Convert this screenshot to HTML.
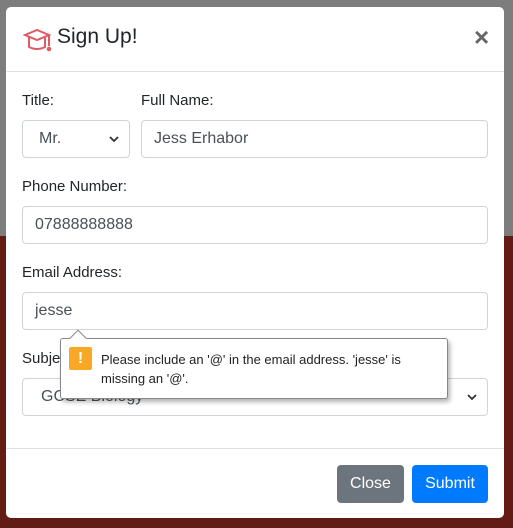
<!DOCTYPE html>
<html><head><style>
body{margin:0;width:513px;height:528px;overflow:hidden;position:relative;font-family:"Liberation Sans",sans-serif;background:#631b15}
.top{position:absolute;left:0;top:0;width:513px;height:236px;background:#7d7d7d}
.modal{position:absolute;left:6px;top:7px;width:498px;height:511px;background:#fff;border-radius:5px}
.hdr{position:absolute;left:0;top:0;width:498px;height:64px;border-bottom:1px solid #dee2e6}
.ttl{position:absolute;left:51px;top:18px;font-size:21px;color:#212529}
.x{position:absolute;left:468px;top:15px;font-size:26px;color:#666;font-weight:bold}
.lbl{position:absolute;font-size:15px;color:#212529}
.inp{position:absolute;border:1px solid #ced4da;border-radius:4px;font-size:16px;color:#495057;line-height:36px;padding-left:12px;box-sizing:border-box;height:38px}
.chev{position:absolute;right:10px;top:14px}
.ftr{position:absolute;left:0;top:441px;width:498px;border-top:1px solid #dee2e6}
.btn{position:absolute;top:458px;height:38px;border-radius:4px;color:#fff;font-size:16px;line-height:38px;text-align:center}
.tip{position:absolute;left:60px;top:338px;width:388px;height:61px;background:#fff;border:1px solid #888;border-radius:3px;box-shadow:2px 3px 5px rgba(0,0,0,.3);box-sizing:border-box}
.tip:before{content:"";position:absolute;left:11px;top:-7px;width:11px;height:11px;background:#fff;border-left:1px solid #888;border-top:1px solid #888;transform:rotate(45deg)}
.warn{position:absolute;left:8px;top:8px;width:23px;height:23px;background:#f9a825;color:#fff;font-weight:bold;text-align:center;line-height:23px;font-size:16px;border-radius:2px}
.msg{position:absolute;left:40px;top:11px;font-size:13px;line-height:19px;color:#222;width:340px}
</style></head><body>
<div class="top"></div>
<div class="modal">
<div class="hdr">
<svg style="position:absolute;left:17px;top:20px" width="30" height="30" viewBox="0 0 30 30" fill="none" stroke="#e05a66" stroke-width="2"><path d="M2 8 L14 3 L26 8 L14 13 Z"/><path d="M6 10 V20 Q14 24 22 20 V10"/><path d="M26 8 V19"/><circle cx="26" cy="22" r="1.3" fill="#e05a66"/></svg>
<div class="ttl">Sign Up!</div>
<div class="x">×</div>
</div>
<div class="lbl" style="left:16px;top:85px">Title:</div>
<div class="lbl" style="left:135px;top:85px">Full Name:</div>
<div class="inp" style="left:16px;top:113px;width:108px;padding-left:16px">Mr.<svg class="chev" width="10" height="8" viewBox="0 0 10 8"><path d="M1 2 L5 6 L9 2" fill="none" stroke="#333" stroke-width="1.8"/></svg></div>
<div class="inp" style="left:135px;top:113px;width:347px">Jess Erhabor</div>
<div class="lbl" style="left:16px;top:171px">Phone Number:</div>
<div class="inp" style="left:16px;top:199px;width:466px">07888888888</div>
<div class="lbl" style="left:16px;top:257px">Email Address:</div>
<div class="inp" style="left:16px;top:285px;width:466px">jesse</div>
<div class="lbl" style="left:16px;top:343px">Subject:</div>
<div class="inp" style="left:16px;top:371px;width:466px;padding-left:18px">GCSE Biology<svg class="chev" width="10" height="8" viewBox="0 0 10 8"><path d="M1 2 L5 6 L9 2" fill="none" stroke="#333" stroke-width="1.8"/></svg></div>
<div class="ftr"></div>
<div class="btn" style="left:331px;width:67px;background:#6c757d">Close</div>
<div class="btn" style="left:406px;width:76px;background:#007bff">Submit</div>
</div>
<div class="tip"><div class="warn">!</div><div class="msg">Please include an '@' in the email address. 'jesse' is missing an '@'.</div></div>
</body></html>
